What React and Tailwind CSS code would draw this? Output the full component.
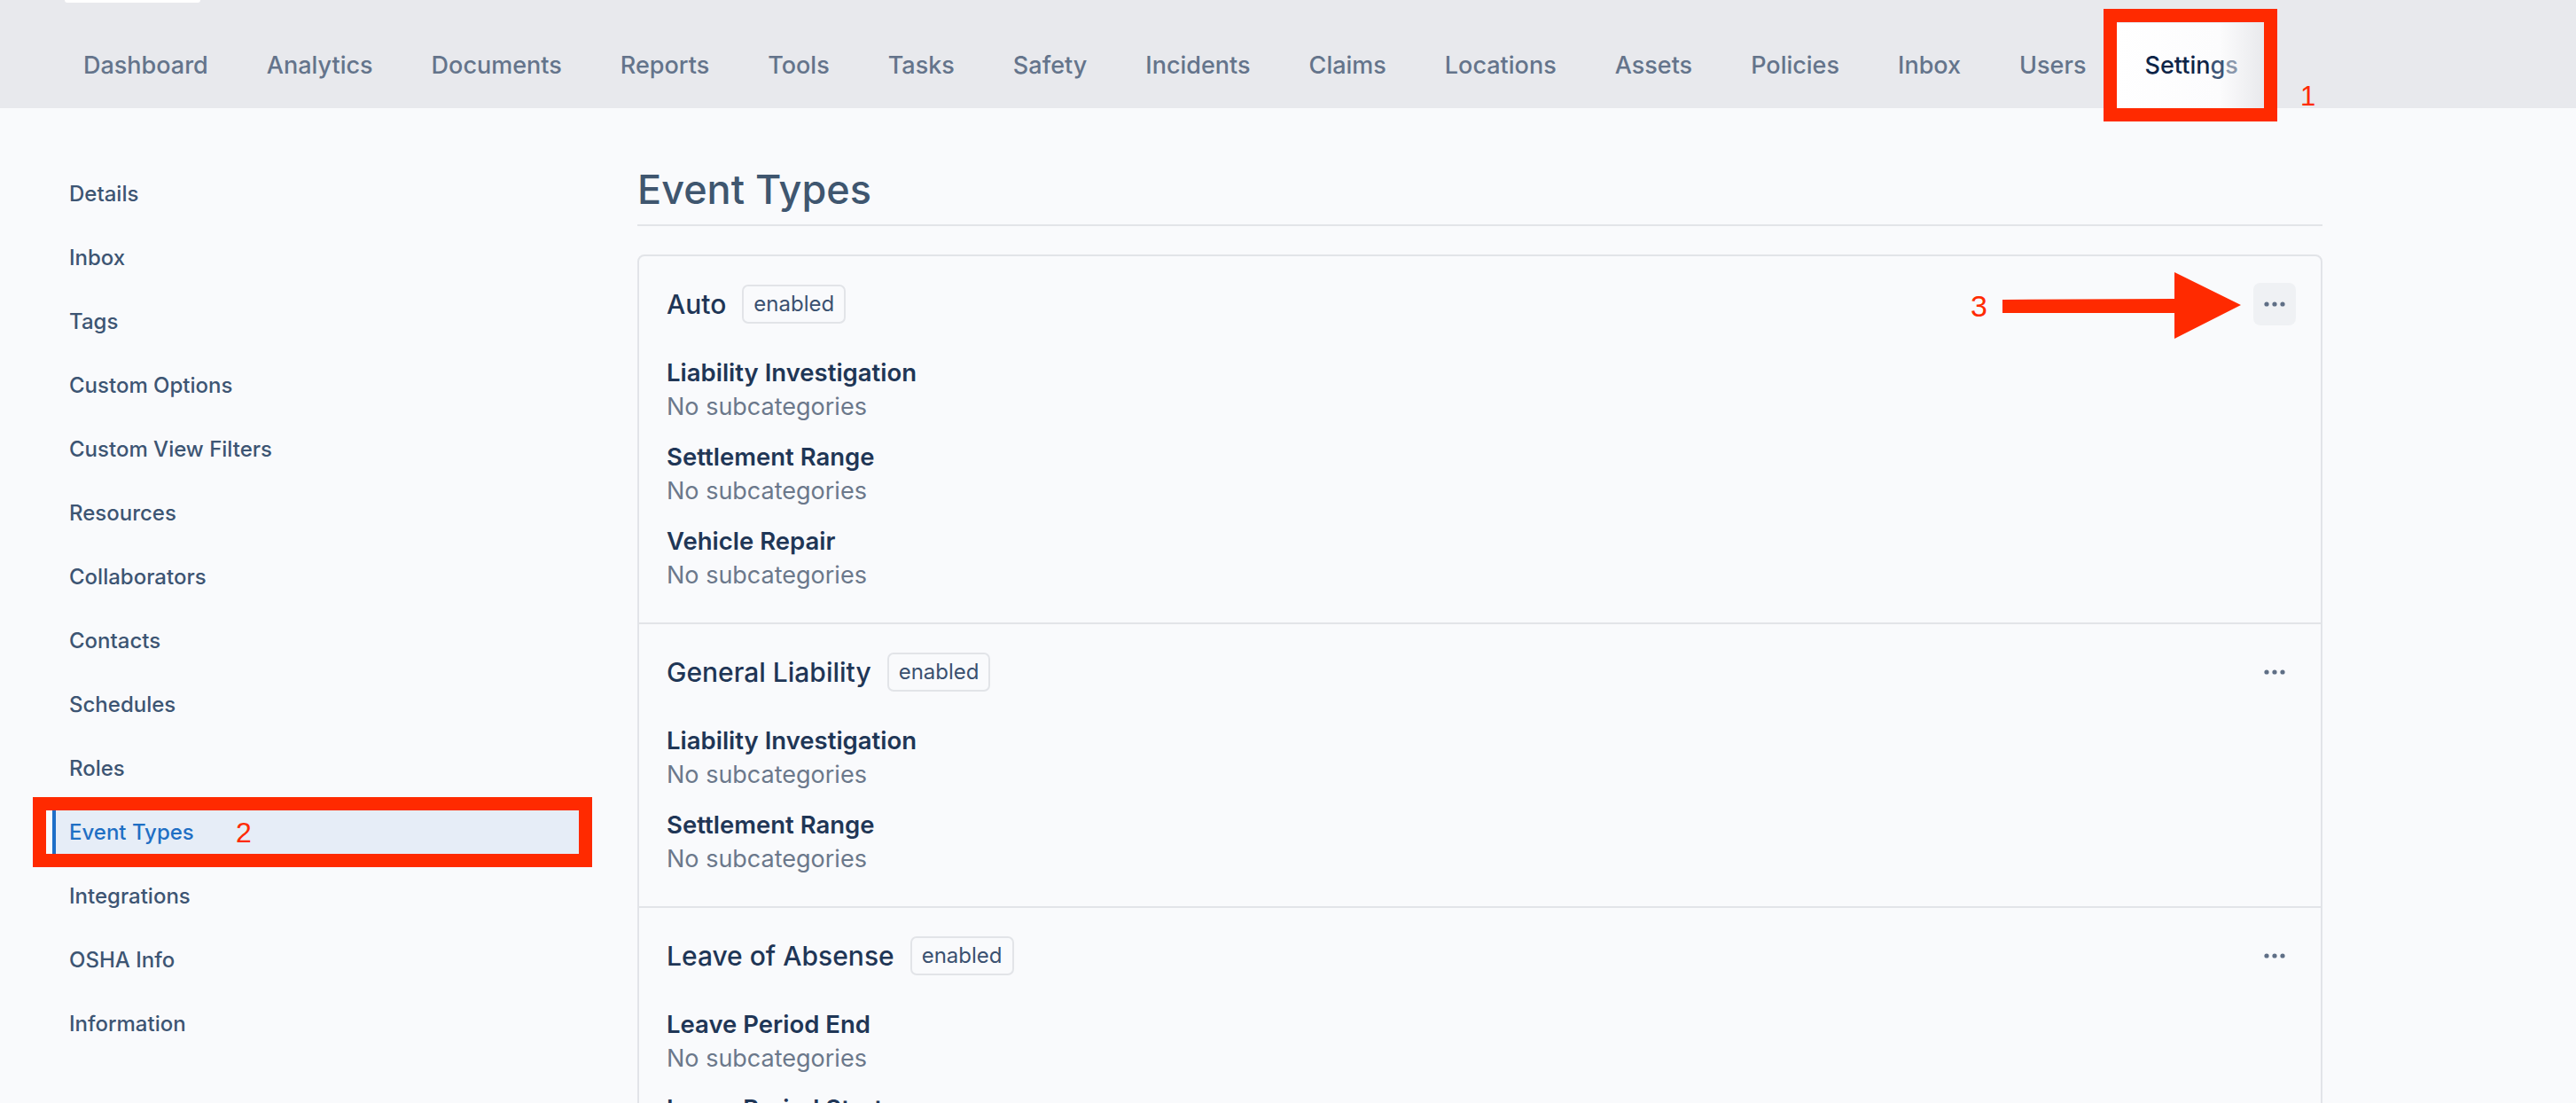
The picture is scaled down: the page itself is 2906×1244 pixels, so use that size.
import React from "react";

const navItems = [
  "Dashboard",
  "Analytics",
  "Documents",
  "Reports",
  "Tools",
  "Tasks",
  "Safety",
  "Incidents",
  "Claims",
  "Locations",
  "Assets",
  "Policies",
  "Inbox",
  "Users",
];

const sideItems = [
  "Details",
  "Inbox",
  "Tags",
  "Custom Options",
  "Custom View Filters",
  "Resources",
  "Collaborators",
  "Contacts",
  "Schedules",
  "Roles",
  "Event Types",
  "Integrations",
  "OSHA Info",
  "Information",
];

const eventTypes = [
  {
    name: "Auto",
    active: true,
    groups: ["Liability Investigation", "Settlement Range", "Vehicle Repair"],
  },
  {
    name: "General Liability",
    groups: ["Liability Investigation", "Settlement Range"],
  },
  {
    name: "Leave of Absense",
    groups: ["Leave Period End", "Leave Period Start", "Return to Work"],
  },
];

function Dots() {
  return (
    <svg width="24" height="8" viewBox="0 0 24 8" fill="#5f6f86">
      <circle cx="3" cy="4" r="2.6" />
      <circle cx="12" cy="4" r="2.6" />
      <circle cx="21" cy="4" r="2.6" />
    </svg>
  );
}

function EventSection({ item, first }) {
  return (
    <div className={first ? "pl-[31px] pr-[28px] pt-[30px] pb-[33px]" : "border-t-2 border-[#e2e4e8] pl-[31px] pr-[28px] pt-[30px] pb-[33px]"}>
      {/* header row */}
      <div className="flex h-[48px] items-center">
        <span className="text-[30px] font-medium text-[#1f3656]">{item.name}</span>
        <span className="ml-[18px] flex h-[44px] items-center rounded-[7px] border-2 border-[#e2e4e8] px-[11px] text-[24px] text-[#3b5170]">
          enabled
        </span>
        <button
          className={
            item.active
              ? "ml-auto flex h-[48px] w-[48px] items-center justify-center rounded-[8px] bg-[#eff1f4]"
              : "ml-auto flex h-[48px] w-[48px] items-center justify-center rounded-[8px]"
          }
        >
          <Dots />
        </button>
      </div>

      <div className="mt-[34px] flex flex-col gap-[17px]">
        {item.groups.map((g) => (
          <div key={g}>
            <div className="text-[27.5px] font-semibold leading-[38px] text-[#1f3656]">{g}</div>
            <div className="text-[27px] leading-[40px] text-[#6b788b]">No subcategories</div>
          </div>
        ))}
      </div>
    </div>
  );
}

export default function App() {
  return (
    <div className="relative h-[1244px] w-[2906px] overflow-hidden bg-[#f9fafc] font-['Inter',sans-serif]">
      {/* Top nav */}
      <header className="flex h-[122px] flex-col bg-[#e8e9ed]">
        <div className="ml-[73px] h-[3px] w-[153px] rounded-b-[3px] bg-white" />
        <nav className="mt-[23px] flex h-[96px] pl-[61px]">
          {navItems.map((n) => (
            <div key={n} className="flex items-center px-[33px] text-[27px] font-medium text-[#64748b]">
              {n}
            </div>
          ))}
          <div className="flex items-center bg-[linear-gradient(90deg,#ffffff_0%,#fcfcfd_68%,#e7e8eb_100%)] px-[33px] text-[27px] font-medium text-[#0d2447]">
            Settin
            <span className="text-[#3c5475]">g</span>
            <span className="text-[#8a97ab]">s</span>
          </div>
        </nav>
      </header>

      <div className="flex">
        {/* Sidebar */}
        <aside className="w-[719px] shrink-0 pt-[69px]">
          <ul className="flex flex-col gap-[16px]">
            {sideItems.map((s) => (
              <li
                key={s}
                className={
                  s === "Event Types"
                    ? "ml-[59px] flex h-[56px] w-[600px] items-center border-l-4 border-[#1e6fc8] bg-[#e6edf7] pl-[15px] text-[24px] font-medium text-[#1f6fc4]"
                    : "ml-[59px] flex h-[56px] w-[600px] items-center border-l-4 border-transparent pl-[15px] text-[24px] font-medium text-[#3d5573]"
                }
              >
                {s}
              </li>
            ))}
          </ul>
        </aside>

        {/* Main */}
        <main className="w-[1901px] shrink-0 pt-[65px]">
          <h1 className="border-b-2 border-[#e2e4e8] pb-[12px] text-[45px] font-medium leading-[54px] text-[#3f566f]">
            Event Types
          </h1>
          <div className="mt-[32px] rounded-[8px] border-2 border-[#e2e4e8]">
            {eventTypes.map((e, i) => (
              <EventSection key={e.name} item={e} first={i === 0} />
            ))}
          </div>
        </main>
      </div>

      {/* Annotations */}
      <div className="absolute left-[2373px] top-[10px] h-[127px] w-[196px] border-[15px] border-[#ff2a00]" />
      <div className="absolute left-[2595px] top-[93px] font-['Liberation_Sans',sans-serif] text-[31px] leading-none text-[#ff2a00]">
        1
      </div>

      <div className="absolute left-[37px] top-[899px] h-[79px] w-[631px] border-[15px] border-[#ff2a00]" />
      <div className="absolute left-[266px] top-[923px] font-['Liberation_Sans',sans-serif] text-[32px] leading-none text-[#ff2a00]">
        2
      </div>

      <div className="absolute left-[2223px] top-[328px] font-['Liberation_Sans',sans-serif] text-[34px] leading-none text-[#ff2a00]">
        3
      </div>
      <svg className="absolute left-[2259px] top-[307px]" width="270" height="76" viewBox="0 0 270 76">
        <polygon points="0,31 194,30 194,0 269,37 194,75 194,46 0,46" fill="#ff2a00" />
      </svg>
    </div>
  );
}
